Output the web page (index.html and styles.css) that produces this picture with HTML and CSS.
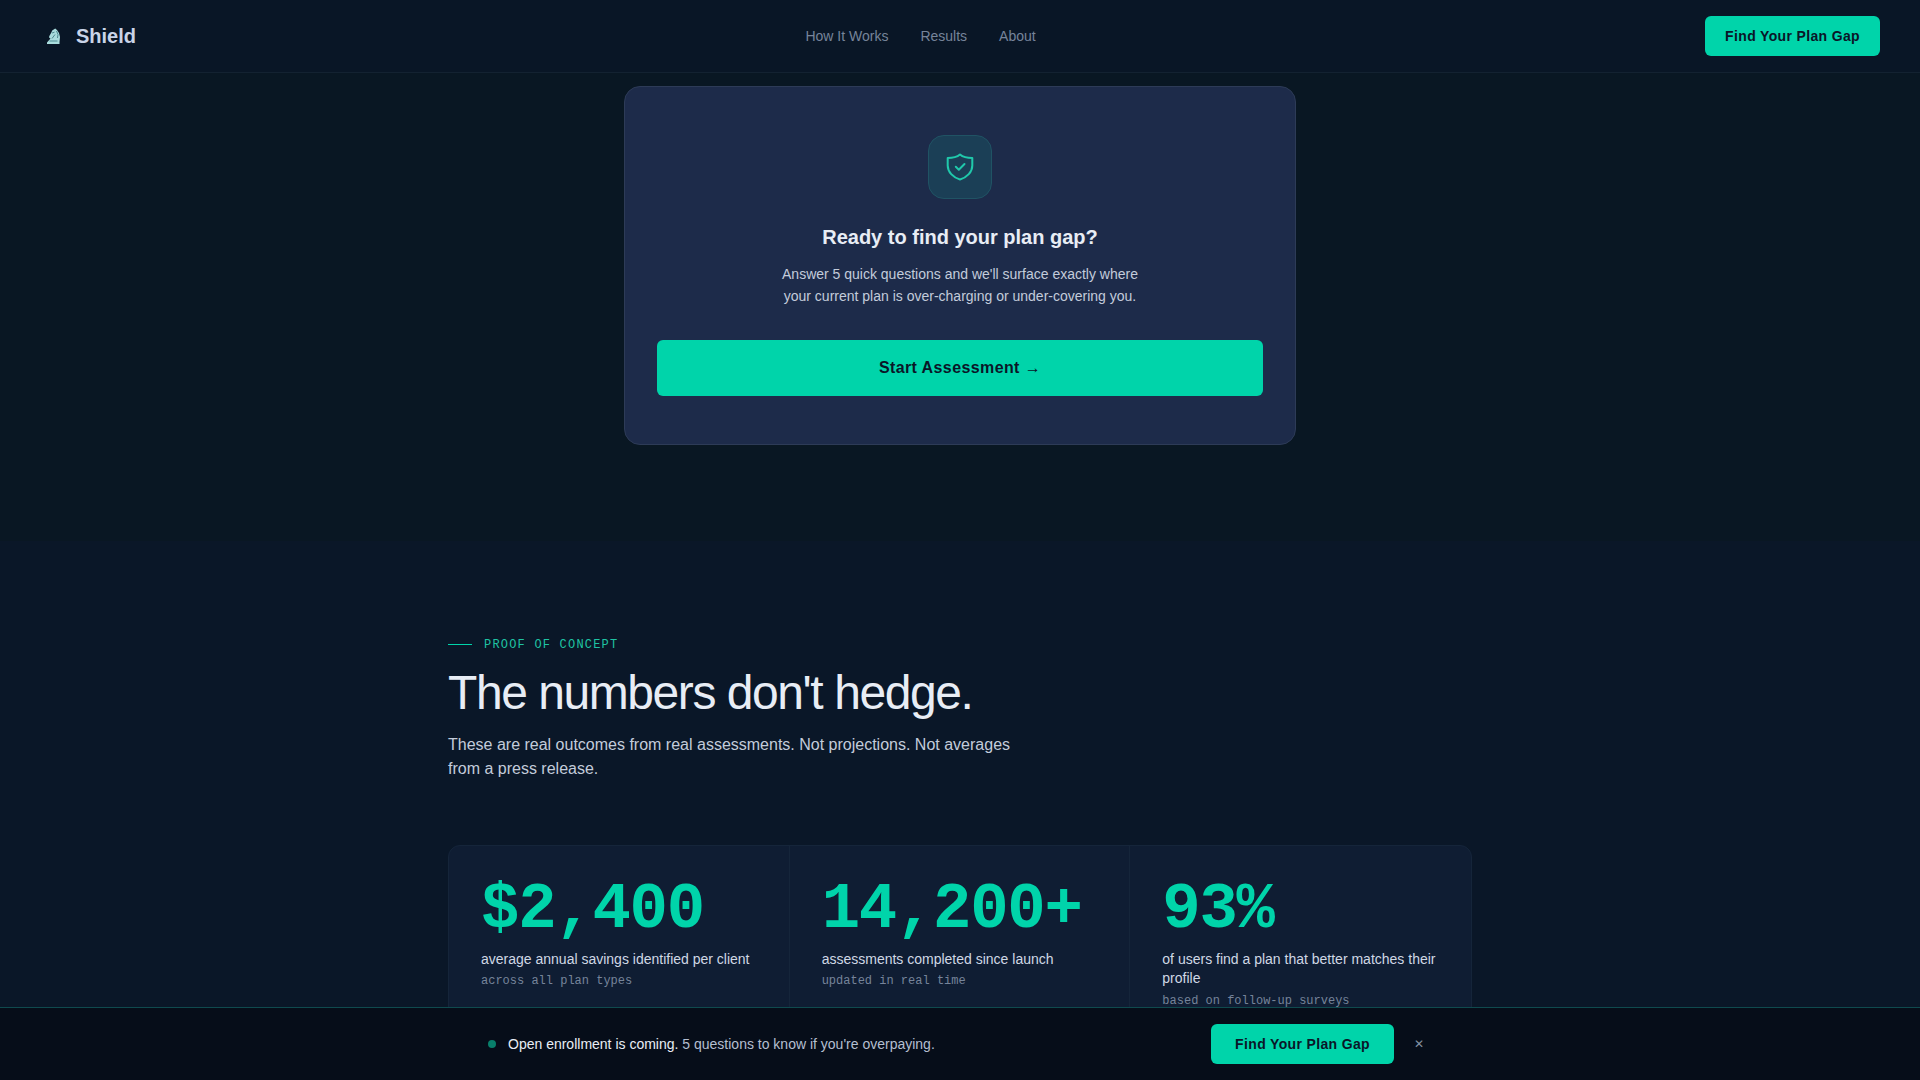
FILE: index.html
```html
<!DOCTYPE html>
<html lang="en">
<head>
    <meta charset="UTF-8">
    <meta name="viewport" content="width=device-width, initial-scale=1.0">
    <title>Shield - Find Your Plan Gap</title>
    <link rel="stylesheet" href="styles.css">
</head>
<body>
    <nav class="navbar">
        <a href="#" class="logo">
            <svg class="logo-icon" viewBox="0 0 28 28" aria-hidden="true">
                <path d="M7 22v-1.500l3.500-4-1.300-.8 0-1.500 2-3.500 1-2.200 3-2 1.800 1.500 2 3 1 4-.5 5 0 2z" fill="#a9dcdd"/>
                <path d="M12 11l2.500-.8M16.500 9l1.500 3.500-.5 3.500M15 12.500l-3 4M9.500 19h8" fill="none" stroke="#4d8990" stroke-width="1"/>
            </svg>
            <span>Shield</span>
        </a>
        <div class="nav-links">
            <a href="#how">How It Works</a>
            <a href="#results">Results</a>
            <a href="#about">About</a>
        </div>
        <button type="button" class="btn btn-nav">Find Your Plan Gap</button>
    </nav>

    <main>
        <section class="assessment">
            <div class="assessment-card">
                <div class="card-icon">
                    <svg viewBox="0 0 28 28" aria-hidden="true">
                        <path d="M14 1.500C11 4 6 5 1.700 5v7.500C1.700 19 7 24.500 14 26.500c7-2 12.300-7.500 12.300-14V5C22 5 17 4 14 1.500z"/>
                        <path d="M9.800 13.800l3 2.900 5.700-5.700"/>
                    </svg>
                </div>
                <h3>Ready to find your plan gap?</h3>
                <p>Answer 5 quick questions and we'll surface exactly where your current plan is over-charging or under-covering you.</p>
                <button type="button" class="btn btn-start">Start Assessment →</button>
            </div>
        </section>

        <section class="proof" id="results">
            <div class="container">
                <div class="eyebrow">Proof of concept</div>
                <h2>The numbers don't hedge.</h2>
                <p class="lead">These are real outcomes from real assessments. Not projections. Not averages from a press release.</p>

                <div class="stats">
                    <div class="stat">
                        <div class="stat-number">$2,400</div>
                        <div class="stat-label">average annual savings identified per client</div>
                        <div class="stat-note">across all plan types</div>
                    </div>
                    <div class="stat">
                        <div class="stat-number">14,200+</div>
                        <div class="stat-label">assessments completed since launch</div>
                        <div class="stat-note">updated in real time</div>
                    </div>
                    <div class="stat">
                        <div class="stat-number">93%</div>
                        <div class="stat-label">of users find a plan that better matches their profile</div>
                        <div class="stat-note">based on follow-up surveys</div>
                    </div>
                </div>
            </div>
        </section>
    </main>

    <div class="sticky-bar">
        <div class="sticky-inner">
            <span class="dot"></span>
            <p><strong>Open enrollment is coming.</strong> 5 questions to know if you're overpaying.</p>
            <button type="button" class="btn btn-sticky">Find Your Plan Gap</button>
            <button type="button" class="close" aria-label="Dismiss">✕</button>
        </div>
    </div>
</body>
</html>
```
FILE: styles.css
```css
:root {
    --accent: #00d4aa;
    --navy: #0a1628;
    --card: #1d2b4a;
    --text: #e8edf5;
    --text-soft: #c3ccdb;
    --text-muted: #76849a;
    --sans: "Liberation Sans", Arial, sans-serif;
    --mono: "Liberation Mono", "Courier New", monospace;
}

* {
    margin: 0;
    padding: 0;
    box-sizing: border-box;
}

body {
    background: var(--navy);
    color: var(--text);
    font-family: var(--sans);
    scrollbar-width: none;
}

html {
    scrollbar-width: none;
}

a {
    color: inherit;
    text-decoration: none;
}

/* Buttons */
.btn {
    height: 40px;
    border: none;
    border-radius: 6px;
    background: var(--accent);
    color: var(--navy);
    font-family: var(--sans);
    font-size: 14px;
    font-weight: 700;
    letter-spacing: 0.025em;
    cursor: pointer;
}

.btn-nav {
    padding: 0 20px;
}

.btn-sticky {
    padding: 0 24px;
}

.btn-start {
    width: 100%;
    height: 56px;
    font-size: 16px;
}

/* Navbar */
.navbar {
    position: fixed;
    top: 0;
    left: 0;
    right: 0;
    z-index: 10;
    display: flex;
    align-items: center;
    justify-content: space-between;
    padding: 16px 40px;
    background: #091626;
    border-bottom: 1px solid #132231;
}

.logo {
    display: flex;
    align-items: center;
    gap: 8px;
    color: #c9d4e8;
    font-size: 20px;
    font-weight: 700;
}

.logo-icon {
    width: 28px;
    height: 28px;
}

.nav-links {
    display: flex;
    gap: 32px;
    color: var(--text-muted);
    font-size: 14px;
}

/* Assessment */
.assessment {
    padding: 86px 24px 96px;
    background: #091723;
}

.assessment-card {
    display: flex;
    flex-direction: column;
    align-items: center;
    max-width: 672px;
    margin: 0 auto;
    padding: 48px 32px;
    background: var(--card);
    border: 1px solid #2d3b57;
    border-radius: 16px;
    text-align: center;
}

.card-icon {
    display: flex;
    align-items: center;
    justify-content: center;
    width: 64px;
    height: 64px;
    margin-bottom: 24px;
    background: #1b3f56;
    border: 1px solid #205364;
    border-radius: 16px;
}

.card-icon svg {
    width: 28px;
    height: 28px;
    fill: none;
    stroke: #20c9ab;
    stroke-width: 2;
    stroke-linecap: round;
    stroke-linejoin: round;
}

.assessment-card h3 {
    margin-bottom: 12px;
    font-size: 20px;
    line-height: 28px;
}

.assessment-card p {
    max-width: 384px;
    margin-bottom: 32px;
    color: var(--text-soft);
    font-size: 14px;
    line-height: 1.6;
}

/* Proof */
.proof {
    padding: 96px 24px;
    background: #0a1728;
}

.container {
    max-width: 1024px;
    margin: 0 auto;
}

.eyebrow {
    display: flex;
    align-items: center;
    gap: 12px;
    margin-bottom: 16px;
    color: #1fc3a3;
    font-family: var(--mono);
    font-size: 12px;
    line-height: 16px;
    letter-spacing: 0.1em;
    text-transform: uppercase;
}

.eyebrow::before {
    content: "";
    width: 24px;
    height: 1px;
    background: var(--accent);
}

.proof h2 {
    margin-bottom: 16px;
    font-size: 48px;
    font-weight: 400;
    line-height: 48px;
    letter-spacing: -0.03em;
}

.lead {
    max-width: 576px;
    margin-bottom: 64px;
    color: var(--text-soft);
    font-size: 16px;
    line-height: 24px;
}

.stats {
    display: grid;
    grid-template-columns: repeat(3, 1fr);
    background: #0f1d33;
    border: 1px solid #15253a;
    border-radius: 12px;
    overflow: hidden;
}

.stat {
    padding: 32px;
    border-right: 1px solid #15253a;
}

.stat:last-child {
    border-right: none;
}

.stat-number {
    margin-bottom: 8px;
    color: var(--accent);
    font-family: var(--mono);
    font-size: 64px;
    font-weight: 700;
    line-height: 64px;
    letter-spacing: -0.02em;
}

.stat-label {
    margin-bottom: 4px;
    color: #d0d8e5;
    font-size: 14px;
    line-height: 1.4;
}

.stat-note {
    color: var(--text-muted);
    font-family: var(--mono);
    font-size: 12px;
    line-height: 16px;
}

/* Sticky bar */
.sticky-bar {
    position: fixed;
    left: 0;
    right: 0;
    bottom: 0;
    z-index: 10;
    padding: 16px 0;
    background: #060d19;
    border-top: 1px solid #0f4a4e;
}

.sticky-inner {
    display: flex;
    align-items: center;
    gap: 12px;
    max-width: 1024px;
    margin: 0 auto;
    padding: 0 40px;
}

.sticky-inner p {
    flex: 1;
    color: #b4bfd0;
    font-size: 14px;
}

.sticky-inner strong {
    color: var(--text);
    font-weight: 400;
}

.dot {
    width: 8px;
    height: 8px;
    border-radius: 50%;
    background: #087f6b;
}

.close {
    padding: 8px;
    border: none;
    background: none;
    color: #8390a3;
    font-family: var(--sans);
    font-size: 12px;
    cursor: pointer;
}
```
